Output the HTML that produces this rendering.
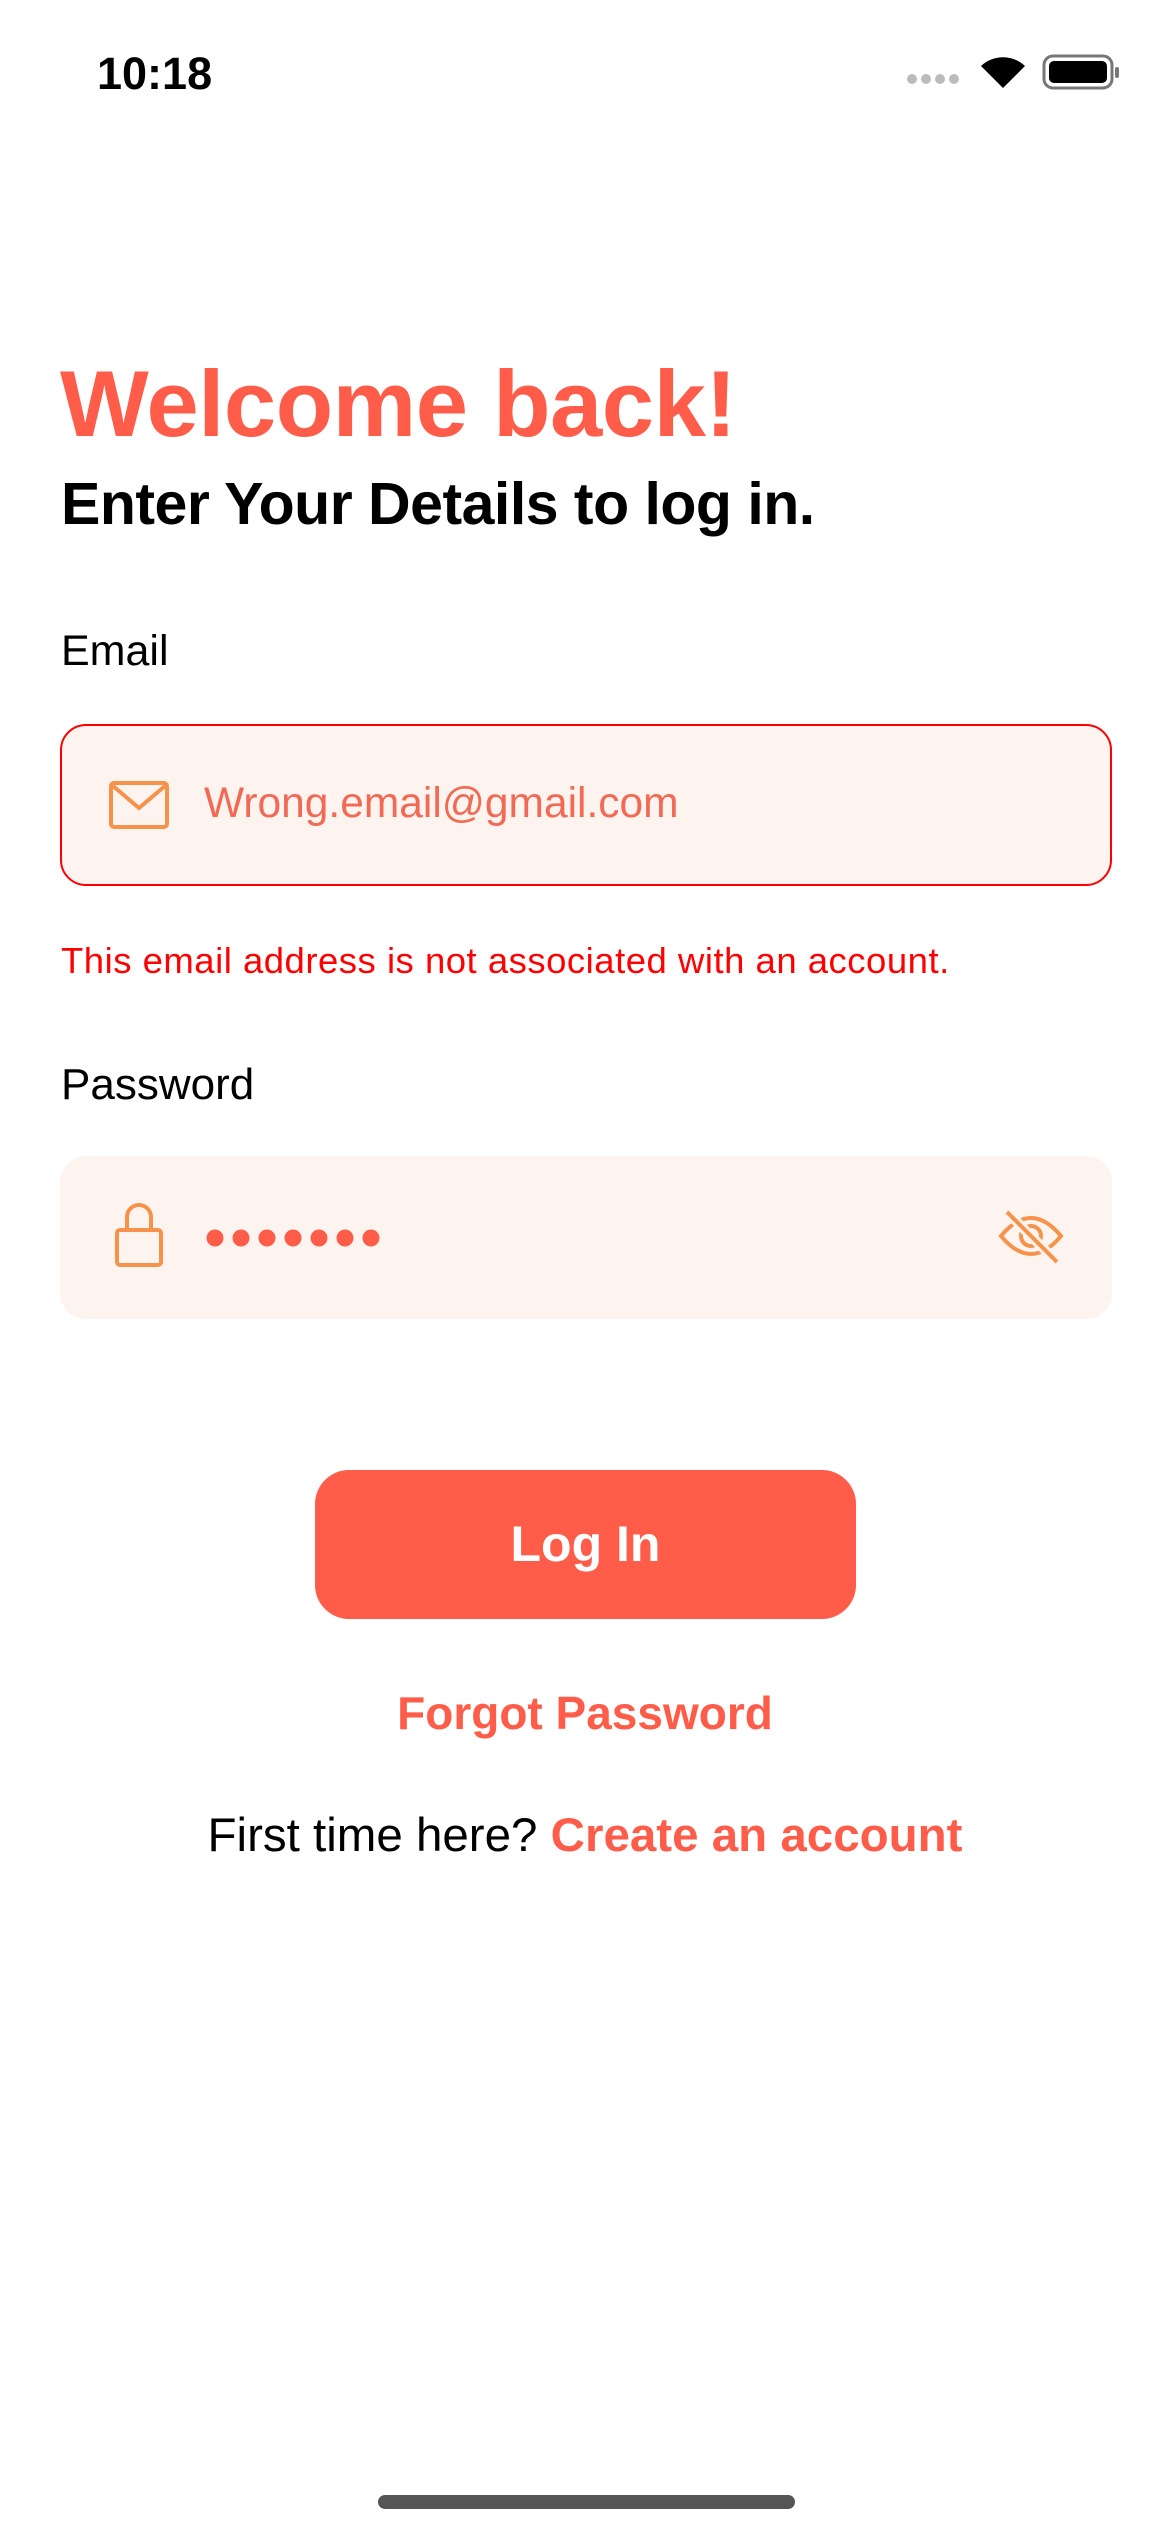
<!DOCTYPE html>
<html><head><meta charset="utf-8"><style>
*{margin:0;padding:0;box-sizing:border-box}
body{width:1170px;height:2532px;background:#fff;position:relative;overflow:hidden;font-family:"Liberation Sans",sans-serif}
.a{position:absolute;white-space:nowrap}
.c{color:#ff5c4a}
</style></head><body>
<div class="a" style="left:97px;top:48px;font-size:45px;font-weight:700;color:#000">10:18</div>
<svg class="a" style="left:905px;top:44px" width="215" height="50" viewBox="0 0 215 50">
<g fill="#bbb"><circle cx="7" cy="35" r="5"/><circle cx="21" cy="35" r="5"/><circle cx="35" cy="35" r="5"/><circle cx="49" cy="35" r="5"/></g>
<path d="M98 44 L76 22 A32 32 0 0 1 120 22 Z" fill="#000"/>
<rect x="139" y="12" width="68" height="32" rx="9" fill="none" stroke="#777" stroke-width="3"/>
<rect x="144" y="17" width="58" height="22" rx="5" fill="#000"/>
<rect x="210" y="23" width="4" height="11" rx="2" fill="#777"/>
</svg>
<div class="a c" style="left:60px;top:350px;font-size:94px;font-weight:700;letter-spacing:-0.5px">Welcome back!</div>
<div class="a" style="left:61px;top:470px;font-size:59px;font-weight:700;color:#000;letter-spacing:-0.5px">Enter Your Details to log in.</div>
<div class="a" style="left:61px;top:627px;font-size:43px;color:#000">Email</div>
<div class="a" style="left:60px;top:724px;width:1052px;height:162px;border:2px solid #f00;border-radius:26px;background:#fdf4ef"></div>
<svg class="a" style="left:108px;top:780px" width="62" height="50" viewBox="0 0 62 50"><rect x="3" y="3" width="56" height="44" rx="3" fill="none" stroke="#f7924a" stroke-width="4"/><path d="M5 6 L31 28 L57 6" fill="none" stroke="#f7924a" stroke-width="4"/></svg>
<div class="a" style="left:204px;top:780px;font-size:42.5px;color:#f26a55">Wrong.email@gmail.com</div>
<div class="a" style="left:61px;top:940px;font-size:36.5px;color:#f00;letter-spacing:0.5px">This email address is not associated with an account.</div>
<div class="a" style="left:61px;top:1060px;font-size:44px;color:#000">Password</div>
<div class="a" style="left:60px;top:1156px;width:1052px;height:163px;border-radius:26px;background:#fdf4ef"></div>
<svg class="a" style="left:113px;top:1203px" width="52" height="66" viewBox="0 0 52 66"><rect x="4" y="27" width="44" height="35" rx="3" fill="none" stroke="#f7924a" stroke-width="4"/><path d="M14 27 V14 A12 12 0 0 1 38 14 V27" fill="none" stroke="#f7924a" stroke-width="4"/></svg>
<svg class="a" style="left:205px;top:1228px" width="180" height="20" viewBox="0 0 180 20"><g fill="#ff5c4a"><circle cx="10" cy="10" r="8.5"/><circle cx="36" cy="10" r="8.5"/><circle cx="62" cy="10" r="8.5"/><circle cx="88" cy="10" r="8.5"/><circle cx="114" cy="10" r="8.5"/><circle cx="140" cy="10" r="8.5"/><circle cx="166" cy="10" r="8.5"/></g></svg>
<svg class="a" style="left:997px;top:1208px" width="68" height="56" viewBox="0 0 68 56"><path d="M4 28 Q34 -8 64 28 Q34 64 4 28 Z" fill="none" stroke="#f7924a" stroke-width="4"/><circle cx="34" cy="28" r="10" fill="none" stroke="#f7924a" stroke-width="4"/><path d="M10 4 L60 54" stroke="#fdf4ef" stroke-width="10"/><path d="M10 4 L60 54" stroke="#f7924a" stroke-width="4"/></svg>
<div class="a" style="left:315px;top:1470px;width:541px;height:149px;border-radius:34px;background:#ff5c4a"></div>
<div class="a" style="left:315px;top:1515px;width:541px;text-align:center;font-size:50px;font-weight:700;color:#fff">Log In</div>
<div class="a c" style="left:0;top:1686px;width:1170px;text-align:center;font-size:46px;font-weight:700">Forgot Password</div>
<div class="a" style="left:0;top:1808px;width:1170px;text-align:center;font-size:47.5px;color:#000">First time here? <span class="c" style="font-weight:700">Create an account</span></div>
<div class="a" style="left:378px;top:2495px;width:417px;height:14px;border-radius:7px;background:#555"></div>
</body></html>
